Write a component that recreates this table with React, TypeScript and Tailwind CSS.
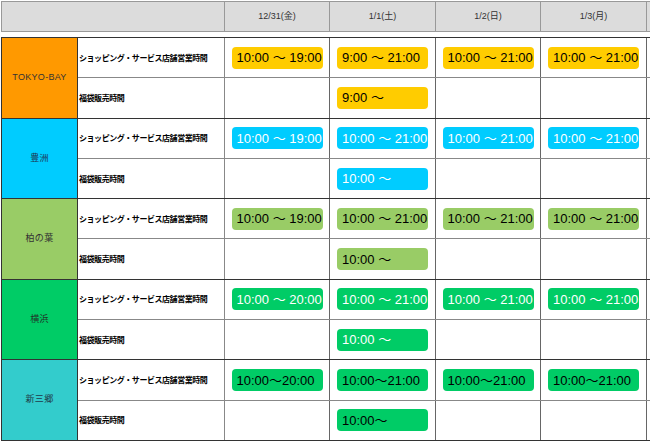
type Slot = { text: string } | null;

type Area = {
  name: string;
  areaBg: string;
  pill: string;
  shop: Slot[];
  bag: Slot[];
};

const DAYS = ['12/31(金)', '1/1(土)', '1/2(日)', '1/3(月)'];

const AREAS: Area[] = [
  {
    name: 'TOKYO-BAY',
    areaBg: 'bg-[#ff9900] text-[#333]',
    pill: 'bg-[#ffcc00] text-black',
    shop: [{ text: '10:00 〜 19:00' }, { text: '9:00 〜 21:00' }, { text: '10:00 〜 21:00' }, { text: '10:00 〜 21:00' }],
    bag: [null, { text: '9:00 〜' }, null, null],
  },
  {
    name: '豊洲',
    areaBg: 'bg-[#00ccff] text-[#1f3550]',
    pill: 'bg-[#00ccff] text-white',
    shop: [{ text: '10:00 〜 19:00' }, { text: '10:00 〜 21:00' }, { text: '10:00 〜 21:00' }, { text: '10:00 〜 21:00' }],
    bag: [null, { text: '10:00 〜' }, null, null],
  },
  {
    name: '柏の葉',
    areaBg: 'bg-[#99cc66] text-[#333]',
    pill: 'bg-[#99cc66] text-black',
    shop: [{ text: '10:00 〜 19:00' }, { text: '10:00 〜 21:00' }, { text: '10:00 〜 21:00' }, { text: '10:00 〜 21:00' }],
    bag: [null, { text: '10:00 〜' }, null, null],
  },
  {
    name: '横浜',
    areaBg: 'bg-[#00cc66] text-[#1f3a2a]',
    pill: 'bg-[#00cc66] text-white',
    shop: [{ text: '10:00 〜 20:00' }, { text: '10:00 〜 21:00' }, { text: '10:00 〜 21:00' }, { text: '10:00 〜 21:00' }],
    bag: [null, { text: '10:00 〜' }, null, null],
  },
  {
    name: '新三郷',
    areaBg: 'bg-[#33cccc] text-[#1f3a4a]',
    pill: 'bg-[#00cc66] text-black',
    shop: [{ text: '10:00〜20:00' }, { text: '10:00〜21:00' }, { text: '10:00〜21:00' }, { text: '10:00〜21:00' }],
    bag: [null, { text: '10:00〜' }, null, null],
  },
];

// widths of the four day columns, border included
const dayWidth = ['w-[105px]', 'w-[106px]', 'w-[105px]', 'w-[106px]'];

const Pill = ({ slot, color }: { slot: Slot; color: string }) => {
  if (!slot) return null;
  return (
    <div
      className={`h-[22px] w-[91px] rounded-[4px] flex items-center px-[5px] whitespace-nowrap text-[13px] leading-none ${color}`}
    >
      {slot.text}
    </div>
  );
};

const Row = ({ label, slots, color, last }: { label: string; slots: Slot[]; color: string; last?: boolean }) => (
  <div className={`flex flex-1 ${last ? '' : 'border-b border-[#888]'}`}>
    <div className="w-[147px] shrink-0 border-r border-[#888] flex items-center pl-[1px] text-[8px] font-bold tracking-[-0.45px] text-black whitespace-nowrap font-['Noto_Sans_CJK_JP',sans-serif]">
      {label}
    </div>
    {slots.map((slot, i) => (
      <div key={i} className={`${dayWidth[i]} shrink-0 border-r border-[#666] flex items-center justify-center`}>
        <Pill slot={slot} color={color} />
      </div>
    ))}
  </div>
);

export default function App() {
  return (
    <div className="w-[650px] h-[442px] bg-white pl-[1px] pt-[1px] overflow-hidden font-['Liberation_Sans','Noto_Sans_CJK_JP',sans-serif]">
      {/* header */}
      <div className="flex h-[31px] border-l border-t border-b border-[#999] bg-[#dcdcdc] text-[9px] text-[#333]">
        <div className="w-[223px] shrink-0 border-r border-[#999]" />
        {DAYS.map((d, i) => (
          <div key={d} className={`${dayWidth[i]} shrink-0 border-r border-[#999] flex items-center justify-center`}>
            {d}
          </div>
        ))}
      </div>

      {/* body */}
      <div className="mt-[5px] h-[404px] flex flex-col border-l border-t border-[#333]">
        {AREAS.map(area => (
          <div key={area.name} className="flex flex-1 border-b border-[#333]">
            <div
              className={`w-[76px] shrink-0 border-r border-[#333] flex items-center justify-center text-[9px] tracking-[0.3px] ${area.areaBg}`}
            >
              {area.name}
            </div>
            <div className="flex flex-col flex-1">
              <Row label="ショッピング・サービス店舗営業時間" slots={area.shop} color={area.pill} />
              <Row label="福袋販売時間" slots={area.bag} color={area.pill} last />
            </div>
          </div>
        ))}
      </div>
    </div>
  );
}
